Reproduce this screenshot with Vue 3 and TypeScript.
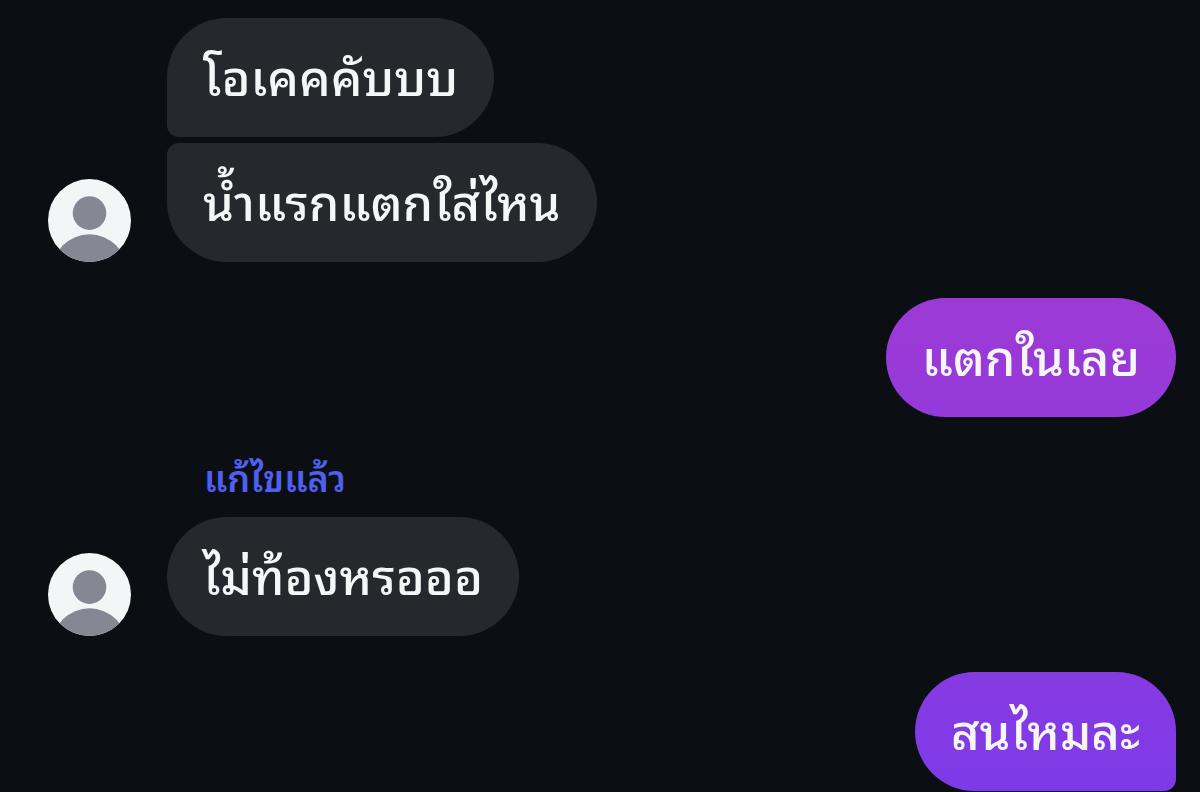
<script setup lang="ts">
interface Message {
  id: number
  text: string
  shape: string
  avatar: boolean
}
interface Group {
  id: number
  mine: boolean
  label?: string
  tone?: string
  messages: Message[]
}

const groups: Group[] = [
  {
    id: 1,
    mine: false,
    messages: [
      { id: 1, text: 'โอเคคคับบบ', shape: 'first', avatar: false },
      { id: 2, text: 'น้ำแรกแตกใส่ไหน', shape: 'last', avatar: true },
    ],
  },
  {
    id: 2,
    mine: true,
    tone: 'orchid',
    messages: [{ id: 3, text: 'แตกในเลย', shape: 'single', avatar: false }],
  },
  {
    id: 3,
    mine: false,
    label: 'แก้ไขแล้ว',
    messages: [{ id: 4, text: 'ไม่ท้องหรอออ', shape: 'single', avatar: true }],
  },
  {
    id: 4,
    mine: true,
    tone: 'violet',
    messages: [{ id: 5, text: 'สนไหมละ', shape: 'opening', avatar: false }],
  },
]
</script>

<template>
  <main class="chat">
    <section v-for="group in groups" :key="group.id" class="group" :class="{ mine: group.mine }">
      <button v-if="group.label" type="button" class="edited">{{ group.label }}</button>
      <div v-for="message in group.messages" :key="message.id" class="row">
        <div v-if="!group.mine" class="avatar-slot">
          <svg v-if="message.avatar" class="avatar" viewBox="0 0 84 84" aria-hidden="true">
            <defs>
              <clipPath :id="`face-${message.id}`"><circle cx="42" cy="42" r="42" /></clipPath>
            </defs>
            <g :clip-path="`url(#face-${message.id})`">
              <rect width="84" height="84" fill="#f3f5f7" />
              <circle cx="42" cy="34.5" r="17" fill="#858893" />
              <circle cx="42" cy="94" r="38" fill="#858893" />
            </g>
          </svg>
        </div>
        <p class="bubble" :class="[message.shape, group.tone]">{{ message.text }}</p>
      </div>
    </section>
  </main>
</template>

<style>
body {
  margin: 0;
  background: #0b0f13;
}
</style>

<style scoped>
.chat {
  display: flex;
  flex-direction: column;
  gap: 36px;
  padding: 18px 24px 0 48px;
  font-family: "Noto Sans Thai Looped", "Noto Looped Thai", "Loma", "Noto Sans Thai", "Noto Sans", sans-serif;
}
.group {
  display: flex;
  flex-direction: column;
  align-items: flex-start;
  gap: 6px;
}
.mine {
  align-items: flex-end;
}
.row {
  display: flex;
  align-items: flex-end;
  gap: 36px;
}
.avatar-slot {
  width: 83px;
  flex: none;
}
.avatar {
  display: block;
  width: 83px;
  height: 83px;
}
.bubble {
  margin: 0;
  padding: 25px 36px 31px;
  border-radius: 60px;
  background: #25282d;
  color: #f5f6f8;
  font-size: 49px;
  font-weight: 500;
  line-height: 63px;
  white-space: nowrap;
}
.first {
  border-bottom-left-radius: 12px;
}
.last {
  border-top-left-radius: 12px;
}
.opening {
  border-bottom-right-radius: 12px;
}
.orchid {
  background: linear-gradient(#9d3ad5, #943ada);
}
.violet {
  background: linear-gradient(#863ae2, #7e3ae8);
}
.edited {
  margin: 0 0 12px 156px;
  padding: 0;
  border: 0;
  background: none;
  color: #4f5ff0;
  font-family: inherit;
  font-size: 36px;
  font-weight: 600;
  line-height: 46px;
  cursor: pointer;
}
</style>
